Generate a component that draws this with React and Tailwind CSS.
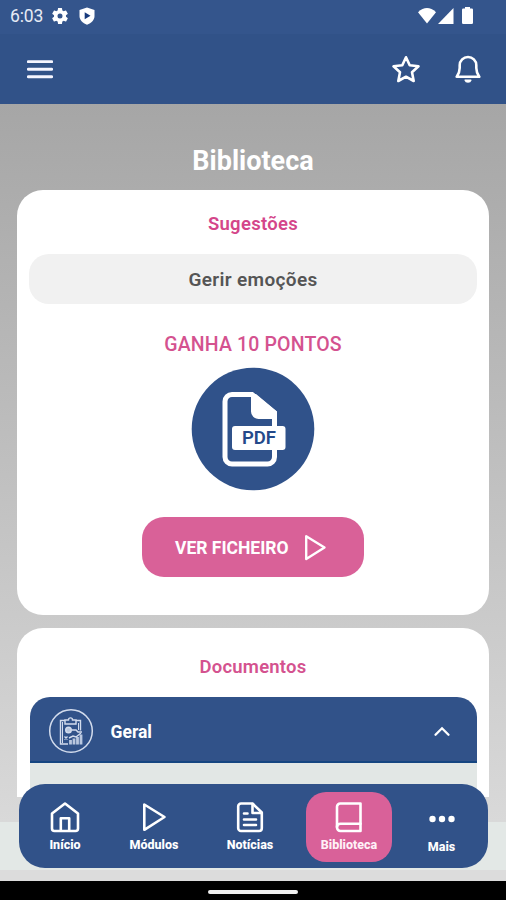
import clsx from "clsx";

function StatusBar() {
  return (
    <div className="flex h-[34px] items-start justify-between bg-[#34558c] pr-[33px] pl-[10px] pt-[6px]">
      <div className="flex items-center">
        <span className="w-[34px] text-[17.500px] leading-5 tracking-[-0.1px] text-[#e6ebf5]">6:03</span>
        <svg viewBox="0 0 24 24" className="ml-[6px] h-[20px] w-[20px]" fill="#fff">
          <path d="M19.14 12.94c.04-.3.06-.61.06-.94 0-.32-.02-.64-.07-.94l2.03-1.58a.49.49 0 0 0 .12-.61l-1.92-3.32a.488.488 0 0 0-.59-.22l-2.39.96c-.5-.38-1.03-.7-1.62-.94l-.36-2.54a.484.484 0 0 0-.48-.41h-3.84c-.24 0-.43.17-.47.41l-.36 2.54c-.59.24-1.13.57-1.62.94l-2.39-.96c-.22-.08-.47 0-.59.22L2.74 8.87c-.12.21-.08.47.12.61l2.03 1.58c-.05.3-.09.63-.09.94s.02.64.07.94l-2.03 1.58a.49.49 0 0 0-.12.61l1.92 3.32c.12.22.37.29.59.22l2.39-.96c.5.38 1.03.7 1.62.94l.36 2.54c.05.24.24.41.48.41h3.84c.24 0 .44-.17.47-.41l.36-2.54c.59-.24 1.13-.56 1.62-.94l2.39.96c.22.08.47 0 .59-.22l1.92-3.32c.12-.22.07-.47-.12-.61l-2.01-1.58zM12 15a3 3 0 1 1 0-6 3 3 0 0 1 0 6z" />
        </svg>
        <svg viewBox="0 0 16 18" className="mb-px ml-[9px] h-[18px] w-4">
          <path d="M8 .5 15.500 3v6c0 4-3 7-7.500 8.700C3.500 16 .5 13 .5 9V3z" fill="#fff" />
          <path d="M5.700 5.300v7L11.500 8.800z" fill="#173a7c" />
        </svg>
      </div>
      <div className="flex items-center pt-px">
        <svg viewBox="0 0 18 16" className="h-4 w-[18px]" fill="#fff">
          <path d="M0 4.200Q9-4 18 4.200L9 15.500z" />
        </svg>
        <svg viewBox="0 0 16 16" className="ml-[2px] h-4 w-4" fill="#fff">
          <path d="M15.500 0v16H0z" />
        </svg>
        <svg viewBox="0 0 11 17" className="ml-[8px] h-[17px] w-[11px]" fill="#fff">
          <path d="M3 0h5v1.500h1.500A1.300 1.300 0 0 1 11 2.800v12.900A1.300 1.300 0 0 1 9.700 17H1.300A1.300 1.300 0 0 1 0 15.700V2.800A1.300 1.300 0 0 1 1.300 1.500H3z" />
        </svg>
      </div>
    </div>
  );
}

function TopBar() {
  return (
    <header className="flex h-[70px] items-center justify-between bg-[#315288] pr-[24px] pl-[27px]">
      <svg viewBox="0 0 26 20" className="h-5 w-[26px]" stroke="#f5f5ff" strokeWidth="2.900" strokeLinecap="round">
        <path d="M1.300 2.600h23.400M1.300 10.300h23.400M1.300 17.700h23.400" />
      </svg>
      <div className="flex items-center gap-[33px]">
        <svg viewBox="0 0 30 30" className="h-[30px] w-[30px]" fill="none" stroke="#fff" strokeWidth="2.600" strokeLinejoin="round">
          <path d="m15 3.300 3.700 7.900 8.800 1.100-6.500 6 1.700 8.700-7.700-4.300L7.300 27 9 18.300l-6.500-6 8.800-1.100z" />
        </svg>
        <svg viewBox="0 0 28 30" className="h-[30px] w-7" fill="none" stroke="#fff" strokeWidth="2.600" strokeLinejoin="round" strokeLinecap="round">
          <path d="M5.700 14v-2.700a8.300 8.300 0 0 1 16.600 0V14c0 4.300 1.200 6 3 8.800H2.700c1.800-2.800 3-4.500 3-8.800z" />
          <path d="M11.200 26.300h5.600c-.8 2.400-4.800 2.400-5.600 0z" fill="#fff" strokeWidth="1.500" />
        </svg>
      </div>
    </header>
  );
}

function PdfBadge() {
  return (
    <svg viewBox="0 0 124 124" className="h-[124px] w-[124px]">
      <circle cx="62" cy="62" r="61.300" fill="#30528a" />
      <path
        d="M83.500 59V46L61 27.500H41a7 7 0 0 0-7 7V90a7 7 0 0 0 7 7H76.500a7 7 0 0 0 7-7v-7"
        fill="none"
        stroke="#fff"
        strokeWidth="5"
      />
      <path d="M60 27h5L86 44.500V52H67.500A7.500 7.500 0 0 1 60 44.500z" fill="#fff" />
      <rect x="41" y="59" width="53.500" height="24" rx="3" fill="#fff" />
      <text x="68" y="77" textAnchor="middle" fontFamily="Roboto, sans-serif" fontWeight="600" fontSize="18.500" fill="#24498a">
        PDF
      </text>
    </svg>
  );
}

function ReportIcon() {
  return (
    <svg viewBox="0 0 46 46" className="mt-[3px] h-[46px] w-[46px]" fill="none" stroke="#d3dced" strokeWidth="1.400">
      <circle cx="23" cy="23" r="21.300" strokeWidth="1.500" />
      <path d="M17 12.500h-4.500v23.500H20M28 12.500h4.500v10" />
      <path d="M14.500 14v21M30.500 15v7" strokeWidth="1" />
      <path d="M17 12h3.500c0-2.800 4-2.800 4 0H28v4H17z" />
      <circle cx="20.500" cy="22" r="2.800" fill="#b9c7df" />
      <path d="M24 22h4l2 2h4M16.500 28.500l3 3m0-3-3 3" />
      <path d="M22.500 36.500V32M26 36.500v-6M29.500 36.500v-7.500M33 36.500v-10" strokeWidth="2.800" stroke="#b9c7df" />
      <path d="m21 30 4-2 3 1 5-4" />
    </svg>
  );
}

const iconProps = {
  viewBox: "0 0 30 32",
  className: "h-8 w-[30px]",
  fill: "none",
  stroke: "#fff",
  strokeWidth: 2.6,
  strokeLinejoin: "round",
  strokeLinecap: "round",
};

function HomeIcon() {
  return (
    <svg {...iconProps}>
      <path d="M2 12.500 15 2.500l13 10v15a2.500 2.500 0 0 1-2.500 2.500h-21A2.500 2.500 0 0 1 2 27.500z" />
      <path d="M10.800 29.500V17.300h8.400v12.200" />
    </svg>
  );
}

function PlayIcon({ className = "h-8 w-[30px]" }) {
  return (
    <svg {...iconProps} className={className}>
      <path d="M5.300 3.500v25.300L25.500 16z" />
    </svg>
  );
}

function NewsIcon() {
  return (
    <svg {...iconProps}>
      <path d="M17.500 2.500H6A2.800 2.800 0 0 0 3.200 5.300v21.900A2.800 2.800 0 0 0 6 30h18a2.800 2.800 0 0 0 2.800-2.800V11.500z" />
      <path d="M17.500 3v9h9M9 12.500h3.500M9 18.500h12M9 24h12" />
    </svg>
  );
}

function BookIcon() {
  return (
    <svg {...iconProps}>
      <path d="M26.500 2.500H6.300A3.300 3.300 0 0 0 3 5.800v20.700A3.500 3.500 0 0 0 6.500 30h20z" />
      <path d="M3 26c0-2 1.500-3.300 3.500-3.300h20" />
    </svg>
  );
}

function DotsIcon() {
  return (
    <svg viewBox="0 0 28 32" className="h-8 w-7" fill="#fff">
      <circle cx="4.500" cy="16" r="3.200" />
      <circle cx="14" cy="16" r="3.200" />
      <circle cx="23.500" cy="16" r="3.200" />
    </svg>
  );
}

const tabs = [
  { label: "Início", icon: HomeIcon, className: "w-[92px]" },
  { label: "Módulos", icon: PlayIcon, className: "w-[86px]" },
  { label: "Notícias", icon: NewsIcon, className: "w-[106px] mr-[3px]" },
  { label: "Biblioteca", icon: BookIcon, className: "w-[86px] rounded-[20px] bg-[#d96199]", active: true },
  { label: "Mais", icon: DotsIcon, className: "flex-1 pt-[2px] pl-[3px]" },
];

function BottomNav() {
  return (
    <nav className="absolute top-[784px] left-[19px] flex h-[84px] w-[469px] rounded-[26px] bg-[#315289] pt-[8px]">
      {tabs.map(({ label, icon: Icon, className, active }) => (
        <button key={label} className={clsx("flex h-[70px] flex-col items-center", className)}>
          <span className="mt-[9px] flex h-8">
            <Icon />
          </span>
          <span
            className={clsx(
              "mt-[3.500px] text-[12.500px] leading-[15px] font-extrabold",
              active ? "text-[#fff0f7]" : "text-white"
            )}
          >
            {label}
          </span>
        </button>
      ))}
    </nav>
  );
}

export default function App() {
  return (
    <div className="relative flex h-[900px] w-[506px] flex-col overflow-hidden bg-black font-['Roboto',sans-serif]">
      <StatusBar />
      <TopBar />

      <main className="flex h-[718px] flex-col bg-linear-to-b from-[#a6a6a6] to-[#d9d9d9] px-[17px]">
        <h1 className="mt-[40px] text-center text-[27px] leading-[34px] font-bold text-white">Biblioteca</h1>

        {/* Sugestões */}
        <section className="mt-[12px] flex h-[425px] flex-col items-center rounded-[26px] bg-white px-[12px]">
          <h2 className="mt-[22px] text-[18.500px] leading-6 font-semibold tracking-[0.3px] text-[#d4468a]">Sugestões</h2>
          <div className="mt-[18px] flex h-[50px] w-full items-center justify-center rounded-[20px] bg-[#f1f1f1] pt-[2px] text-[19px] font-semibold tracking-[0.35px] text-[#555]">
            Gerir emoções
          </div>
          <p className="mt-[29px] text-[19.500px] leading-6 font-medium tracking-[0.15px] text-[#d4528f]">GANHA 10 PONTOS</p>
          <div className="mt-[10px]">
            <PdfBadge />
          </div>
          <button className="mt-[26px] flex h-[60px] w-[222px] items-center rounded-[22px] bg-[#d96198] pt-px pl-[33px] text-[17.500px] font-bold text-white">
            <span className="w-[113px] pt-[2px] whitespace-nowrap">VER FICHEIRO</span>
            <PlayIcon className="ml-[13px] h-[29px] w-[28px]" />
          </button>
        </section>

        {/* Documentos */}
        <section className="mt-[13px] flex h-[169px] flex-col items-center rounded-t-[26px] bg-white px-[12.500px]">
          <h2 className="mt-[27px] text-[18.500px] leading-6 font-semibold tracking-[0.2px] text-[#d4528f]">Documentos</h2>
          <div className="mt-[18px] flex h-[66px] w-full shrink-0 items-center rounded-t-[20px] border-b-2 border-[#154580] bg-[#315289] pr-[26px] pl-[18px]">
            <ReportIcon />
            <span className="mt-[6px] ml-[17px] flex-1 text-[17.500px] font-bold text-white">Geral</span>
            <svg viewBox="0 0 18 12" className="mt-[5px] h-3 w-[18px]" fill="none" stroke="#fff" strokeWidth="2.300" strokeLinecap="round">
              <path d="m2.500 8.800 6.500-6.500 6.500 6.500" />
            </svg>
          </div>
          <div className="w-full flex-1 bg-[#e2e7e5]" />
        </section>
      </main>

      <div className="h-[48px] bg-[#e3e8e6]" />
      <div className="h-[11px] bg-[#dcdcdc]" />
      <div className="flex h-[19px] justify-center pt-[9px]">
        <div className="h-[4px] w-[90px] rounded-xs bg-[#f0f0f0]" />
      </div>

      <BottomNav />
    </div>
  );
}
